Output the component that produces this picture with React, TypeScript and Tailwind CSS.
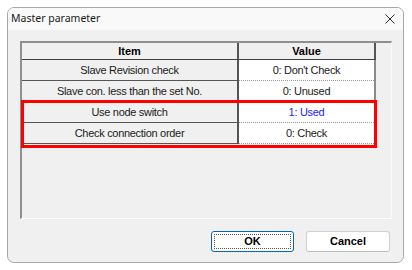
import React from 'react'

type Row = {
  item: string
  value: string
  highlight?: boolean
}

const ROWS: Row[] = [
  { item: 'Slave Revision check', value: "0: Don't Check" },
  { item: 'Slave con. less than the set No.', value: '0: Unused' },
  { item: 'Use node switch', value: '1: Used', highlight: true },
  { item: 'Check connection order', value: '0: Check' },
]

function CloseIcon() {
  return (
    <svg width="10" height="10" viewBox="0 0 10 10" className="block">
      <path d="M0.5 0.5 L9.5 9.5 M9.5 0.5 L0.5 9.5" stroke="#2b2b2b" strokeWidth="1" fill="none" />
    </svg>
  )
}

export default function App() {
  return (
    <div className="h-[270px] w-[412px] bg-white pl-[7px] pt-[7px] font-['Liberation_Sans',Arial,sans-serif]">
      <div className="flex h-[256px] w-[397px] flex-col overflow-hidden rounded-[7px] border border-[#a8a8a8] bg-[#f0f0f0]">
        {/* title bar */}
        <div className="flex h-[22px] items-center justify-between bg-[#f9f9f9] pl-[3px] pr-[8px]">
          <span className="font-['Noto_Sans',sans-serif] text-[10.5px] text-[#1a1a1a]">Master parameter</span>
          <CloseIcon />
        </div>

        <div className="flex flex-1 flex-col px-[12px] pt-[11px]">
          {/* list view */}
          <div className="relative h-[178px] w-[372px] border-b border-l-2 border-r border-t-2 border-b-white border-l-[#8f8f8f] border-r-[#fafafa] border-t-[#8f8f8f] bg-[#f0f0f0]">
            <div className="flex h-[17px] text-[11px] font-bold text-black">
              <div className="flex w-[217px] items-center justify-center border-b border-r-2 border-b-[#404040] border-r-[#555555]">
                Item
              </div>
              <div className="flex w-[137px] items-center justify-center border-b border-r-2 border-b-[#404040] border-r-[#555555]">
                Value
              </div>
            </div>
            {ROWS.map((r) => (
              <div key={r.item} className="flex h-[21px] text-[11px] tracking-[-0.3px] text-[#1a1a1a]">
                <div className="flex w-[217px] items-center justify-center border-b border-r-2 border-b-[#555555] border-r-[#555555] bg-[#f0f0f0]">
                  {r.item}
                </div>
                <div className="flex w-[137px] flex-col border-r-2 border-r-[#8a8a8a] bg-white">
                  <div
                    className={`flex flex-1 items-center justify-center ${r.highlight ? 'text-[#2020ff]' : ''}`}
                  >
                    {r.value}
                  </div>
                  <div className="h-0 border-b border-dotted border-[#9a9a9a]" />
                </div>
              </div>
            ))}

            {/* annotation */}
            <div className="absolute left-[-1px] top-[57px] h-[48px] w-[356px] border-[3px] border-[#ff0000]" />
          </div>

          {/* buttons */}
          <div className="mt-[12px] flex justify-end gap-[12px] pr-[1px] text-[11px] font-bold text-black">
            <button className="flex h-[21px] w-[83px] items-center justify-center rounded-[3px] border border-[#0067c0] bg-white p-[2px]">
              <span className="flex h-full w-full items-center justify-center border border-dotted border-[#555555]">OK</span>
            </button>
            <button className="flex h-[21px] w-[84px] items-center justify-center rounded-[3px] border border-[#d0d0d0] border-b-[#bdbdbd] bg-white">
              Cancel
            </button>
          </div>
        </div>
      </div>
    </div>
  )
}
